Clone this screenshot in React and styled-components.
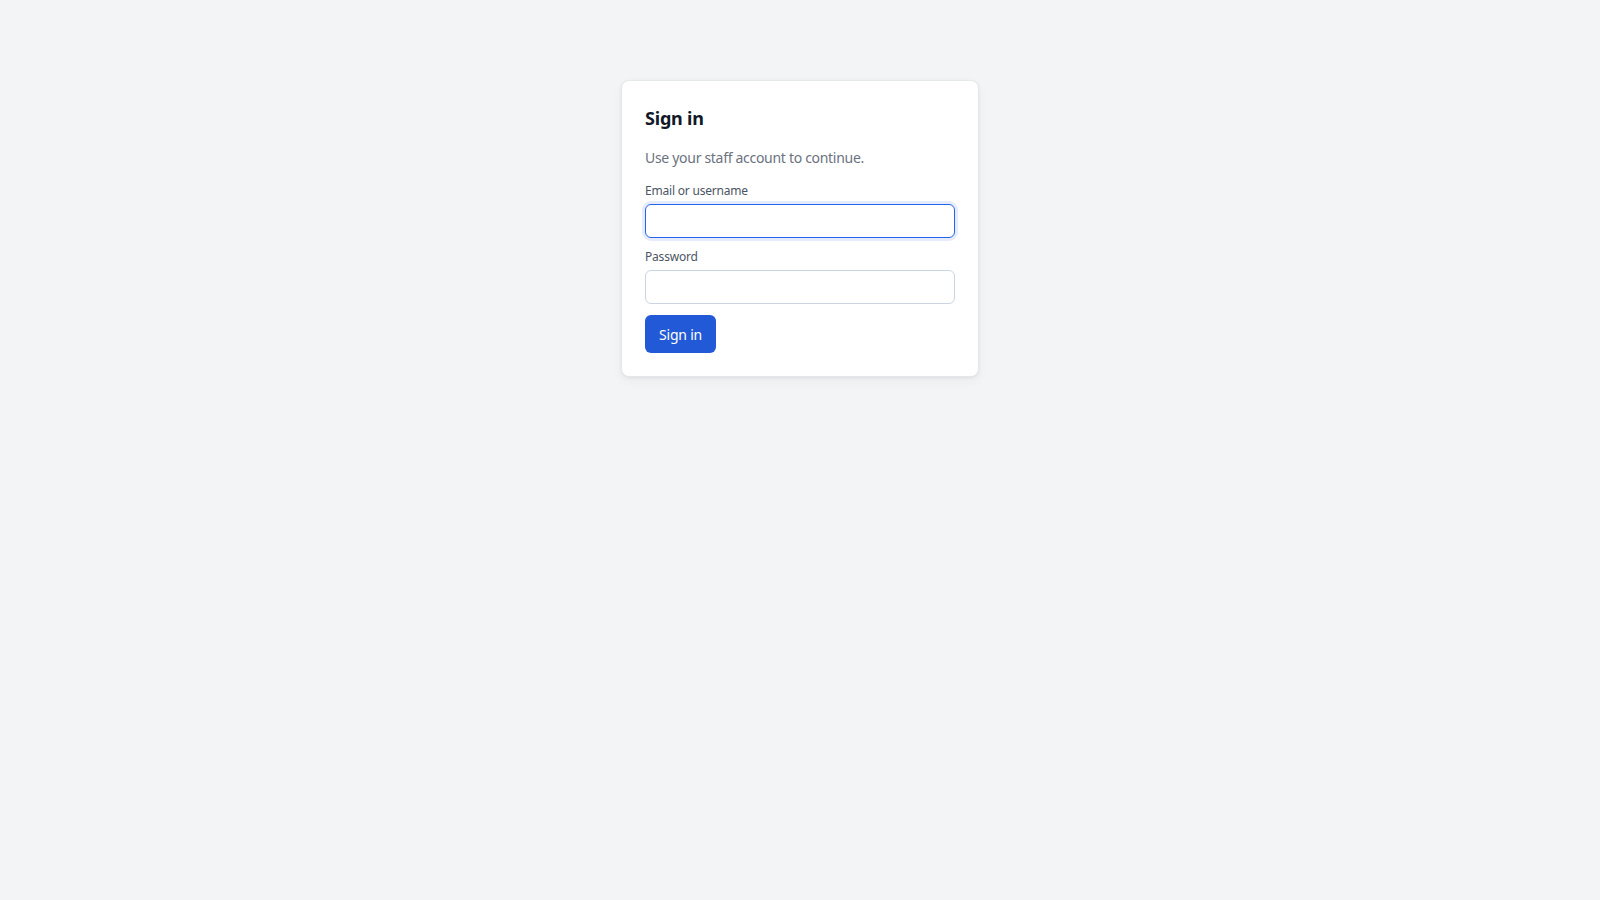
import React from "react";
import styled, { createGlobalStyle, css } from "styled-components";

const Global = createGlobalStyle`
  * { box-sizing: border-box; }
  html, body { margin: 0; padding: 0; background: #f3f4f6; }
  body { font-family: "Segoe UI", "Noto Sans", sans-serif; color: #111827; }
`;

const Page = styled.main`
  min-height: 900px;
  display: flex;
  justify-content: center;
  align-items: flex-start;
  padding-top: 80px;
`;

const Card = styled.form`
  width: 358px;
  background: #ffffff;
  border: 1px solid #e5e7eb;
  border-radius: 8px;
  box-shadow: 0 1px 3px rgba(0, 0, 0, 0.06), 0 4px 12px rgba(0, 0, 0, 0.04);
  padding: 25px 23px 23px;
  display: flex;
  flex-direction: column;
`;

const Title = styled.h1`
  margin: 0;
  font-size: 18px;
  line-height: 24px;
  font-weight: 700;
  color: #111827;
  letter-spacing: -0.2px;
`;

const Subtitle = styled.p`
  margin: 18px 0 0;
  font-size: 14px;
  line-height: 20px;
  color: #6b7280;
  letter-spacing: -0.3px;
`;

const Field = styled.div`
  display: flex;
  flex-direction: column;
  gap: 5px;
  margin-top: ${(p) => p.$top}px;
`;

const Label = styled.label`
  font-size: 12px;
  line-height: 16px;
  color: #4b5563;
  letter-spacing: -0.2px;
`;

const Input = styled.input`
  height: 34px;
  width: 100%;
  border: 1px solid #cbd5e1;
  border-radius: 6px;
  padding: 0 10px;
  font-family: inherit;
  font-size: 14px;
  color: #111827;
  background: #fff;
  outline: none;
  caret-color: #111827;
  ${(p) =>
    p.$focused &&
    css`
      border-color: #2563eb;
      box-shadow: 0 0 0 3px rgba(37, 99, 235, 0.12);
    `}
  &:focus {
    border-color: #2563eb;
    box-shadow: 0 0 0 3px rgba(37, 99, 235, 0.12);
  }
`;

const Button = styled.button`
  align-self: flex-start;
  margin-top: 11px;
  height: 38px;
  padding: 0 14px;
  border: none;
  border-radius: 6px;
  background: #2259d6;
  color: #fff;
  font-family: inherit;
  font-size: 14px;
  letter-spacing: -0.2px;
  cursor: pointer;
`;

export default function App() {
  return (
    <>
      <Global />
      <Page>
        <Card onSubmit={(e) => e.preventDefault()}>
          <Title>Sign in</Title>
          <Subtitle>Use your staff account to continue.</Subtitle>
          <Field $top={15}>
            <Label htmlFor="user">Email or username</Label>
            <Input id="user" type="text" autoFocus $focused />
          </Field>
          <Field $top={11}>
            <Label htmlFor="pw">Password</Label>
            <Input id="pw" type="password" />
          </Field>
          <Button type="submit">Sign in</Button>
        </Card>
      </Page>
    </>
  );
}
